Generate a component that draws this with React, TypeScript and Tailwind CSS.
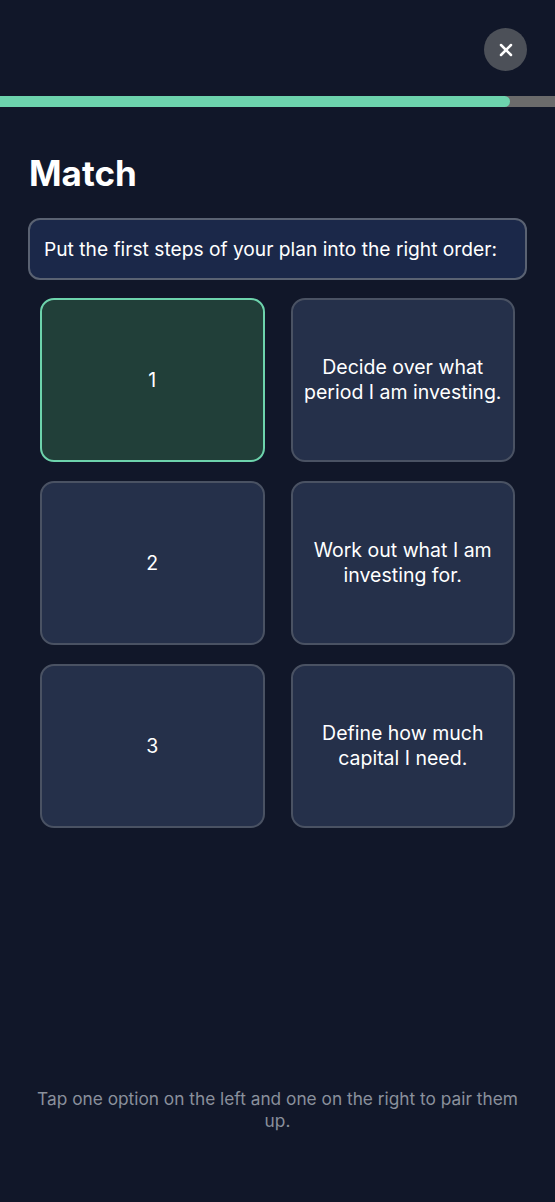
import { X } from "lucide-react";

const rows = [
  { left: "1", right: "Decide over what period I am investing.", active: true },
  { left: "2", right: "Work out what I am investing for.", active: false },
  { left: "3", right: "Define how much capital I need.", active: false },
];

function Card({ text, active = false }: { text: string; active?: boolean }) {
  return (
    <button
      type="button"
      className={`flex h-[164px] items-center justify-center rounded-[14px] border-2 px-2 text-center text-[19.5px] leading-[25px] text-white ${
        active ? "border-[#6dd3ac] bg-[#213f39]" : "border-[#4a5263] bg-[#25304a]"
      }`}
    >
      {text}
    </button>
  );
}

export default function App() {
  return (
    <div
      className="flex min-h-[1202px] flex-col bg-[#111729] text-white"
      style={{ fontFamily: "Inter, 'Noto Sans', sans-serif" }}
    >
      <div className="flex justify-end px-[28px] pt-[28px]">
        <button
          type="button"
          aria-label="Close"
          className="flex h-[43px] w-[43px] items-center justify-center rounded-full bg-[#4c5058]"
        >
          <X className="h-[20px] w-[20px]" strokeWidth={3} />
        </button>
      </div>

      <div className="mt-[25px] h-[11px] w-full bg-[#6b6b6b]">
        <div className="h-full w-[510px] rounded-r-full bg-[#6dd3ad]" />
      </div>

      <h1 className="mt-[46px] px-[29px] text-[35px] font-bold leading-[40px]">Match</h1>

      <div className="mx-[28px] mt-[25px] flex h-[62px] items-center rounded-[12px] border-2 border-[#5a6272] bg-[#1b2849] px-[14px] text-[19.2px]">
        Put the first steps of your plan into the right order:
      </div>

      <div className="mx-[40px] mt-[18px] grid grid-cols-2 gap-x-[26px] gap-y-[19px]">
        {rows.map((r) => (
          <div key={r.left} className="contents">
            <Card text={r.left} active={r.active} />
            <Card text={r.right} />
          </div>
        ))}
      </div>

      <div className="flex-1" />

      <p className="px-[30px] pb-[70px] text-center text-[17.3px] leading-[22px] text-[#8a909c]">
        Tap one option on the left and one on the right to pair them up.
      </p>
    </div>
  );
}
